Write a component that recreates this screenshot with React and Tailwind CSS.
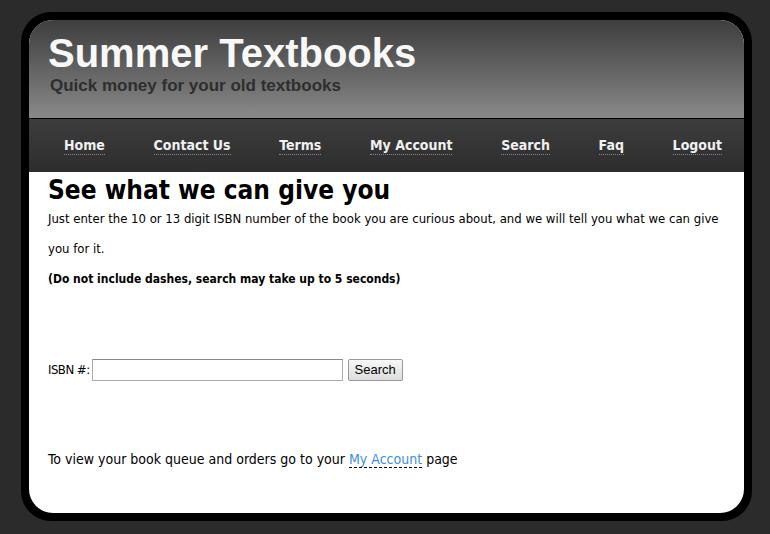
import React from 'react';

const navItems = ['Home', 'Contact Us', 'Terms', 'My Account', 'Search', 'Faq', 'Logout'];

const App = () => (
  <div className="min-h-screen w-full bg-[#2b2b2b] pt-[12px] pl-[21px]">
    <div className="w-[731px] h-[509px] bg-black rounded-[30px] p-[8px]">
      <div className="h-full rounded-[24px] bg-white overflow-hidden flex flex-col">
        <div className="h-[98px] bg-gradient-to-b from-[#3e3e3e] to-[#8a8a8a] pl-[19px] pt-[10px] font-['Liberation_Sans',Arial,sans-serif]">
          <div className="text-[40px] leading-[46px] font-bold text-[#f8f8f8]">Summer Textbooks</div>
          <div className="text-[17px] leading-[20px] font-bold text-[#2e2e2e] pl-[2px]">
            Quick money for your old textbooks
          </div>
        </div>
        <div className="h-[54px] border-t border-black bg-gradient-to-b from-[#3d3d3d] to-[#2d2d2d] flex items-center justify-between pl-[35px] pr-[22px] font-['DejaVu_Sans_Condensed','DejaVu_Sans',sans-serif]">
          {navItems.map((item) => (
            <span
              key={item}
              className="whitespace-nowrap text-[14px] leading-[17px] font-bold text-[#f0f0f0] border-b border-dotted border-[#888]"
            >
              {item}
            </span>
          ))}
        </div>
        <div className="flex-1 border-t border-white px-[19px] font-['DejaVu_Sans_Condensed','DejaVu_Sans',sans-serif] text-black">
          <h1 className="text-[26px] leading-[32px] font-bold mt-[1px]">See what we can give you</h1>
          <p className="text-[13px] leading-[30px] -mt-[2px]">
            Just enter the 10 or 13 digit ISBN number of the book you are curious about, and we will tell you what we can give
            you for it.
          </p>
          <p className="text-[12px] leading-[20px] font-bold mt-[5px]">
            (Do not include dashes, search may take up to 5 seconds)
          </p>
          <div className="flex items-center mt-[70px] text-[13px]">
            <span className="mr-[2px] tracking-[-0.5px]">ISBN #:</span>
            <input
              type="text"
              className="w-[251px] h-[22px] border border-[#aaa] border-t-[#888] bg-white"
            />
            <button className="ml-[5px] h-[22px] px-[6px] border border-[#999] rounded-[2px] bg-gradient-to-b from-[#f8f8f8] to-[#dcdcdc] text-[13px] font-['Liberation_Sans',Arial,sans-serif]">
              Search
            </button>
          </div>
          <p className="mt-[68px] text-[14px] leading-[20px]">
            To view your book queue and orders go to your{' '}
            <a className="text-[#3b8fe6] border-b border-dashed border-black">My Account</a> page
          </p>
        </div>
      </div>
    </div>
  </div>
);

export default App;
